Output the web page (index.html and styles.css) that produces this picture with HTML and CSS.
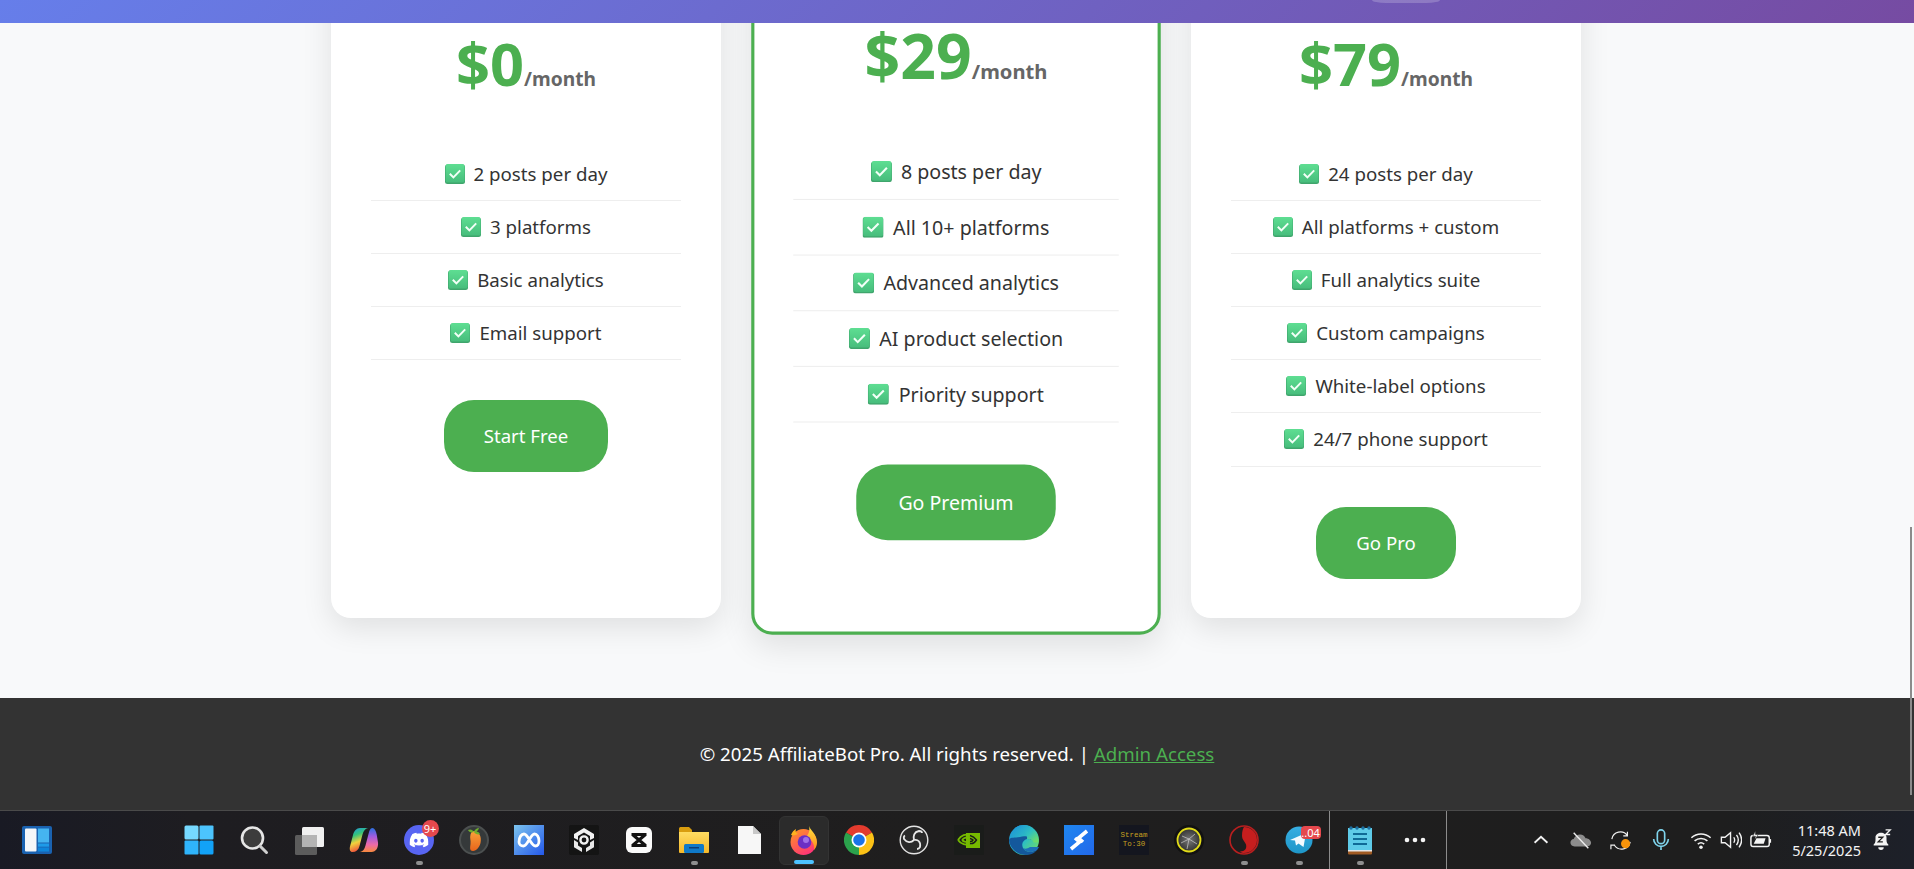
FILE: index.html
```html
<!DOCTYPE html>
<html lang="en">
<head>
<meta charset="utf-8">
<title>AffiliateBot Pro</title>
<link rel="stylesheet" href="styles.css">
</head>
<body>
<svg class="defs" width="0" height="0" aria-hidden="true">
  <defs>
    <linearGradient id="chk" x1="0" y1="0" x2="0" y2="1"><stop offset="0" stop-color="#5ede92"/><stop offset="1" stop-color="#47bd7c"/></linearGradient>
    <symbol id="check" viewBox="0 0 20 20">
      <rect x="0" y="0.5" width="20" height="19.5" rx="2.5" fill="#3fa56c"/>
      <rect x="0.6" y="0" width="19" height="18.6" rx="2.2" fill="url(#chk)"/>
      <path d="M4.8 9.8l3.6 3.6 6.8-7" fill="none" stroke="#f2fff7" stroke-width="2"/>
    </symbol>
    <linearGradient id="cop1" x1="0" y1="0" x2="0.3" y2="1"><stop offset="0" stop-color="#1f8fe8"/><stop offset=".35" stop-color="#33c47c"/><stop offset=".65" stop-color="#f2d23c"/><stop offset="1" stop-color="#f0503c"/></linearGradient>
    <linearGradient id="cop2" x1="0.5" y1="0" x2="0.5" y2="1"><stop offset="0" stop-color="#2a6fe0"/><stop offset=".35" stop-color="#a05ce0"/><stop offset=".7" stop-color="#ee6aa6"/><stop offset="1" stop-color="#f78a3c"/></linearGradient>
    <linearGradient id="meta" x1="0" y1="0" x2="1" y2="1"><stop offset="0" stop-color="#7cc4ee"/><stop offset="1" stop-color="#2458ea"/></linearGradient>
    <linearGradient id="fl" x1="0" y1="0" x2="0" y2="1"><stop offset="0" stop-color="#f9a23a"/><stop offset="1" stop-color="#e8641c"/></linearGradient>
    <linearGradient id="fold" x1="0" y1="0" x2="0" y2="1"><stop offset="0" stop-color="#ffdc62"/><stop offset="1" stop-color="#f5b82a"/></linearGradient>
    <linearGradient id="fox" x1="0" y1="0" x2="0.6" y2="1"><stop offset="0" stop-color="#ff9a1f"/><stop offset="1" stop-color="#ff3576"/></linearGradient>
    <linearGradient id="flame" x1="0" y1="0" x2="0" y2="1"><stop offset="0" stop-color="#ffe13c"/><stop offset="1" stop-color="#ff8a1f"/></linearGradient>
    <linearGradient id="edge" x1="0" y1="0" x2="1" y2="0.8"><stop offset="0" stop-color="#1b8fdc"/><stop offset=".6" stop-color="#2fc0c0"/><stop offset="1" stop-color="#6ddc6a"/></linearGradient>
    <linearGradient id="xm" x1="0" y1="0" x2="1" y2="1"><stop offset="0" stop-color="#1f86f0"/><stop offset="1" stop-color="#2268ea"/></linearGradient>
    <linearGradient id="tg" x1="0" y1="0" x2="0" y2="1"><stop offset="0" stop-color="#37aee2"/><stop offset="1" stop-color="#1e96c8"/></linearGradient>
    <radialGradient id="globe"><stop offset="0" stop-color="#777"/><stop offset="1" stop-color="#333"/></radialGradient>
  </defs>
</svg>

<header class="topbar"><span class="nav-pill"></span></header>

<main class="pricing">
  <div class="plans">
    <article class="plan">
      <div class="price">$0<span class="per">/month</span></div>
      <ul class="features">
        <li class="feature"><svg class="tick"><use href="#check"/></svg><span>2 posts per day</span></li>
        <li class="feature"><svg class="tick"><use href="#check"/></svg><span>3 platforms</span></li>
        <li class="feature"><svg class="tick"><use href="#check"/></svg><span>Basic analytics</span></li>
        <li class="feature"><svg class="tick"><use href="#check"/></svg><span>Email support</span></li>
      </ul>
      <a class="cta">Start Free</a>
    </article>
    <article class="plan plan-featured">
      <div class="price">$29<span class="per">/month</span></div>
      <ul class="features">
        <li class="feature"><svg class="tick"><use href="#check"/></svg><span>8 posts per day</span></li>
        <li class="feature"><svg class="tick"><use href="#check"/></svg><span>All 10+ platforms</span></li>
        <li class="feature"><svg class="tick"><use href="#check"/></svg><span>Advanced analytics</span></li>
        <li class="feature"><svg class="tick"><use href="#check"/></svg><span>AI product selection</span></li>
        <li class="feature"><svg class="tick"><use href="#check"/></svg><span>Priority support</span></li>
      </ul>
      <a class="cta">Go Premium</a>
    </article>
    <article class="plan">
      <div class="price">$79<span class="per">/month</span></div>
      <ul class="features">
        <li class="feature"><svg class="tick"><use href="#check"/></svg><span>24 posts per day</span></li>
        <li class="feature"><svg class="tick"><use href="#check"/></svg><span>All platforms + custom</span></li>
        <li class="feature"><svg class="tick"><use href="#check"/></svg><span>Full analytics suite</span></li>
        <li class="feature"><svg class="tick"><use href="#check"/></svg><span>Custom campaigns</span></li>
        <li class="feature"><svg class="tick"><use href="#check"/></svg><span>White-label options</span></li>
        <li class="feature"><svg class="tick"><use href="#check"/></svg><span>24/7 phone support</span></li>
      </ul>
      <a class="cta">Go Pro</a>
    </article>
  </div>
</main>

<footer class="site-footer">
  <p class="legal">© 2025 AffiliateBot Pro. All rights reserved. | <a class="admin" href="#">Admin Access</a></p>
</footer>

<div class="scroll-thumb"></div>

<nav class="taskbar">
  <div class="widgets">
    <svg class="ico" viewBox="0 0 30 30"><rect x="0" y="1" width="30" height="28" rx="2" fill="#1a62b0"/><rect x="3" y="3.5" width="11.5" height="23" rx="1" fill="#f4f6f8"/><rect x="16" y="3.5" width="11" height="14" fill="#45b4f0"/><rect x="16" y="18.5" width="11" height="3.2" fill="#1e9be8"/><rect x="16" y="22.5" width="11" height="4" fill="#0e85da"/></svg>
  </div>
  <div class="apps">
    <div class="app"><svg class="ico" viewBox="0 0 30 30"><rect x="0.5" y="0.5" width="14" height="14" rx="1.5" fill="#76d9ff"/><rect x="15.5" y="0.5" width="14" height="14" rx="1" fill="#4cc4fd"/><rect x="0.5" y="15.5" width="14" height="14" rx="1" fill="#2fb4fb"/><rect x="15.5" y="15.5" width="14" height="14" rx="1.5" fill="#12a2f7"/></svg></div>
    <div class="app"><svg class="ico" viewBox="0 0 30 30"><circle cx="13.5" cy="13" r="10.5" fill="#3c3c3c" stroke="#e6e6e6" stroke-width="2.6"/><path d="M21 21l6.5 6.5" stroke="#cfcfcf" stroke-width="3" stroke-linecap="round"/></svg></div>
    <div class="app"><svg class="ico" viewBox="0 0 30 30"><rect x="1" y="10" width="22" height="20" rx="1.5" fill="#5c5c5c"/><rect x="8" y="2" width="22" height="20" rx="1.5" fill="#f0f0f0"/><rect x="8" y="10" width="15" height="12" fill="#b4b4b4"/></svg></div>
    <div class="app"><svg class="ico" viewBox="0 0 30 30"><path d="M11 3h8c-3 .5-4.500 3-5.500 6.500L10.500 21c-1 4-3.500 6-7 6C1 27 .3 24.500 1 21.500L4 10c1-4 3.500-7 7-7z" fill="url(#cop1)"/><path d="M19 27h-8c3-.5 4.500-3 5.500-6.500L19.500 9c.8-3.500 1.500-5.500 3.500-6 2.500-.3 4 3 4.700 6.500l1.300 8c.6 5-2 9.500-6.500 9.500z" fill="url(#cop2)"/></svg></div>
    <div class="app is-running">
      <svg class="ico" viewBox="0 0 30 30"><circle cx="15" cy="15" r="15" fill="#5865f2"/><svg x="5.500" y="5.500" width="19" height="19" viewBox="0 0 24 24"><path fill="#fff" d="M20.317 4.3698a19.7913 19.7913 0 00-4.8851-1.5152.0741.0741 0 00-.0785.0371c-.211.3753-.4447.8648-.6083 1.2495-1.8447-.2762-3.68-.2762-5.4868 0-.1636-.3933-.4058-.8742-.6177-1.2495a.077.077 0 00-.0785-.037 19.7363 19.7363 0 00-4.8852 1.515.0699.0699 0 00-.0321.0277C.5334 9.0458-.319 13.5799.0992 18.0578a.0824.0824 0 00.0312.0561c2.0528 1.5076 4.0413 2.4228 5.9929 3.0294a.0777.0777 0 00.0842-.0276c.4616-.6304.8731-1.2952 1.226-1.9942a.076.076 0 00-.0416-.1057c-.6528-.2476-1.2743-.5495-1.8722-.8923a.077.077 0 01-.0076-.1277c.1258-.0943.2517-.1923.3718-.2914a.0743.0743 0 01.0776-.0105c3.9278 1.7933 8.18 1.7933 12.0614 0a.0739.0739 0 01.0785.0095c.1202.099.246.1981.3728.2924a.077.077 0 01-.0066.1276 12.2986 12.2986 0 01-1.873.8914.0766.0766 0 00-.0407.1067c.3604.698.7719 1.3628 1.225 1.9932a.076.076 0 00.0842.0286c1.961-.6067 3.9495-1.5219 6.0023-3.0294a.077.077 0 00.0313-.0552c.5004-5.177-.8382-9.6739-3.5485-13.6604a.061.061 0 00-.0312-.0286zM8.02 15.3312c-1.1825 0-2.1569-1.0857-2.1569-2.419 0-1.3332.9555-2.4189 2.157-2.4189 1.2108 0 2.1757 1.0952 2.1568 2.419 0 1.3332-.9555 2.4189-2.1569 2.4189zm7.9748 0c-1.1825 0-2.1569-1.0857-2.1569-2.419 0-1.3332.9554-2.4189 2.1569-2.4189 1.2108 0 2.1757 1.0952 2.1568 2.419 0 1.3332-.946 2.4189-2.1568 2.4189Z"/></svg></svg>
      <span class="badge badge-round">9+</span>
    </div>
    <div class="app"><svg class="ico" viewBox="0 0 30 30"><circle cx="15" cy="15" r="14" fill="#35393a" stroke="#4c5050" stroke-width="2"/><path d="M15 6c5 0 8 6 6.500 12-1 4-4 8-7.500 8-3.500 0-3-3-2.500-7 .5-4-1-6 0-9.500C12 7 13.500 6 15 6z" fill="url(#fl)"/><path d="M15 7c-2-3-4-3-6-2 1 2 3 3 6 2zm0 0c1-3 3-4 5-4-.5 2-2 4-5 4zm0 0c3-1 5 0 6 2-2 1-5 0-6-2z" fill="#6fae2e"/></svg></div>
    <div class="app"><svg class="ico" viewBox="0 0 30 30"><rect width="30" height="30" fill="url(#meta)"/><path d="M5 17c0-5 2.500-8 5-8 4 0 7 12 11.500 12 2 0 3.500-2 3.500-5 0-4-2-7-4.500-7-4 0-7 12-11 12-2.500 0-4.500-1.500-4.500-4z" fill="none" stroke="#fff" stroke-width="2.800"/></svg></div>
    <div class="app"><svg class="ico" viewBox="0 0 30 30"><rect width="30" height="30" rx="2" fill="#141414"/><path d="M15 3l10 6v4l-4 2v-4l-6-3.500L9 11v4l-4-2V9z" fill="#f2f2f2"/><path d="M5 15l4 2.500v3l4 2.500v4l-8-4.800zM25 15l-4 2.500v3l-4 2.500v4l8-4.800z" fill="#e8e8e8"/><circle cx="15" cy="15" r="3.600" fill="none" stroke="#f2f2f2" stroke-width="2.400"/></svg></div>
    <div class="app"><svg class="ico" viewBox="0 0 30 30"><rect x="2" y="2" width="26" height="26" rx="6" fill="#fafafa"/><path d="M7.500 9.500h15M7.500 20.500h15M8.500 9.500l13 11M21.500 9.500l-13 11" stroke="#111" stroke-width="3" fill="none"/></svg></div>
    <div class="app is-running"><svg class="ico" viewBox="0 0 30 30"><path d="M0 3.500C0 2.500 1 2 2 2h8l3 3v6H0z" fill="#d99d0f"/><path d="M0 27V7h30v20a1 1 0 01-1 1H1a1 1 0 01-1-1z" fill="url(#fold)"/><rect x="5" y="19" width="20" height="9" rx="1.500" fill="#0f79c8"/><rect x="10" y="22" width="10" height="1.500" fill="#0a3e78"/></svg></div>
    <div class="app"><svg class="ico" viewBox="0 0 30 30"><path d="M4 1h15l8 8v20H4z" fill="#f7f7f7"/><path d="M19 1v8h8z" fill="#c8c8c8"/></svg></div>
    <div class="app is-active">
      <svg class="ico" viewBox="0 0 30 30"><circle cx="14.500" cy="17" r="13" fill="url(#fox)"/><path d="M20 1c1 4 8 8 8 16 0 3-1 6-3 8 1-6-3-12-8-13 3-3 4-7 3-11z" fill="url(#flame)"/><path d="M2 10c1-3 3-5 5-6-1 3 0 4 2 5-3 1-5 2-7 1z" fill="#ffb21f"/><circle cx="15.500" cy="17" r="6.800" fill="#6b2fc4"/><circle cx="17" cy="15" r="3" fill="#a070e8"/></svg>
      <span class="active-bar"></span>
    </div>
    <div class="app"><svg class="ico" viewBox="0 0 30 30"><path d="M15 15L2 7.500A15 15 0 0128 7.500z" fill="#e33b2e"/><path d="M15 15L28 7.500A15 15 0 0115 30z" fill="#fbc116"/><path d="M15 15L15 30A15 15 0 012 7.500z" fill="#2ba24c"/><circle cx="15" cy="15" r="7.500" fill="#fff"/><circle cx="15" cy="15" r="5.800" fill="#1a73e8"/></svg></div>
    <div class="app"><svg class="ico" viewBox="0 0 30 30"><circle cx="15" cy="15" r="13.800" fill="#2a2a2a" stroke="#e4e4e4" stroke-width="1.400"/><g fill="none" stroke="#e8e8e8" stroke-width="1.800"><path d="M15 15c-1-4 0-8 5-9 2 0 3 1 3 2"/><path d="M15 15c4-1 7 2 6 7-1 2-2 2-3 2"/><path d="M15 15c-3 3-7 3-10-1-.5-2 0-3 1-3.500"/></g></svg></div>
    <div class="app"><svg class="ico" viewBox="0 0 30 30"><rect width="30" height="30" fill="#1a1c1a"/><path d="M12 8h14v15H12z" fill="#76b900"/><path d="M4 15c3-5 8-6.500 12-4.500M4 15c3 4.500 8 5.500 12 3.500M8 15c2-2.500 5-3 7-1.500M8 15c2 2 5 2.500 7 1" fill="none" stroke="#76b900" stroke-width="1.800"/><path d="M16 10.500c3 .8 5 2.500 6.500 4.500-2 3-4.500 4-6.500 3.500M16 13.500c1.500.3 2.500 1 3 1.500-.8 1.200-2 1.700-3 1.500" fill="none" stroke="#1a1c1a" stroke-width="1.400"/></svg></div>
    <div class="app"><svg class="ico" viewBox="0 0 30 30"><circle cx="15" cy="15" r="15" fill="url(#edge)"/><path d="M0 15C1 24 9 30 17 30c4 0 8-1.500 10-4-5 2-11 1-13-3-2-4 0-8 4-9 3 0 6 1 6 2-2-4-8-6-13-4C5 13 1 12 0 15z" fill="#14589c"/><path d="M14 23c2 4 8 5 13 3 1-1 2-2 3-4h-9c-3 2-5 2-7 1z" fill="#1c6fb8"/><path d="M18 14c3-.5 6 1 6.500 3.500h5C30 8 22 0 15 0c-4 0-8 1.500-10 4 5-2 14 1 13 10z" fill="url(#edge)"/></svg></div>
    <div class="app"><svg class="ico" viewBox="0 0 30 30"><rect width="30" height="30" fill="url(#xm)"/><path d="M23 6l-8.500 7 4.500 4M7 24l8.500-7-4.500-4" fill="none" stroke="#fff" stroke-width="3.600"/></svg></div>
    <div class="app"><div class="stream"><span>Stream</span><span>To:30</span></div></div>
    <div class="app"><svg class="ico" viewBox="0 0 30 30"><circle cx="15" cy="15" r="15" fill="#111"/><circle cx="15" cy="15" r="11.500" fill="url(#globe)" stroke="#e2dc18" stroke-width="1.800"/><path d="M8 11l7 3 6-5M15 14l-2 10M15 14l8 5M7 18l8-4" fill="none" stroke="#cfcfcf" stroke-width=".7"/></svg></div>
    <div class="app is-running"><svg class="ico" viewBox="0 0 30 30"><circle cx="15" cy="15" r="14" fill="#1e1e1e" stroke="#b81f1f" stroke-width="1.600"/><path d="M15 2a13 13 0 010 26c-1 0-3-.5-4-1.500 5 0 7-3 6-7-1-3-4-4.500-4-9 0-4.500 1-7 2-8.500z" fill="#c61e1e"/></svg></div>
    <div class="app is-running">
      <svg class="ico" viewBox="0 0 30 30"><circle cx="15" cy="15" r="13.500" fill="url(#tg)"/><path d="M6 15l16-7-2.500 14-5-3.500-2.500 2-1-5z" fill="#f4fbff"/></svg>
      <span class="badge badge-wide">..04</span>
    </div>
  </div>
  <span class="divider"></span>
  <div class="apps apps-pinned">
    <div class="app is-running"><svg class="ico" viewBox="0 0 30 30"><path d="M3 3h24v24H3z" fill="#5ecbe8"/><path d="M3 26h24v2.500a1 1 0 01-1 1H4a1 1 0 01-1-1z" fill="#a05a22"/><path d="M3 25h24v1.500H3z" fill="#e6e6e6"/><g fill="#1d6fa0"><circle cx="6" cy="3" r="1.700"/><circle cx="12" cy="3" r="1.700"/><circle cx="18" cy="3" r="1.700"/><circle cx="24" cy="3" r="1.700"/></g><path d="M8 9h14M8 14h14M8 19h14" stroke="#0f6a96" stroke-width="2.200"/></svg></div>
    <div class="app"><svg class="ico" viewBox="0 0 30 30"><circle cx="7" cy="15" r="2.300" fill="#f4f4f4"/><circle cx="15" cy="15" r="2.300" fill="#f4f4f4"/><circle cx="23" cy="15" r="2.300" fill="#f4f4f4"/></svg></div>
  </div>
  <span class="divider divider-end"></span>
  <div class="tray">
    <span class="tray-item"><svg class="tray-ico" viewBox="0 0 24 24"><path d="M5 15l7-6.500 7 6.500" fill="none" stroke="#f2f2f2" stroke-width="2"/></svg></span>
    <span class="tray-item"><svg class="tray-ico" viewBox="0 0 24 24"><path d="M5 19c-3 0-4.500-2-4.500-4s1.500-4 3.500-4c1-3 4-5 7-5 3 0 5 1.500 6 4 3.500 0 6 2.500 6 5 0 2-1.500 4-4 4z" fill="#8d8d8d"/><path d="M4 4l16 17" stroke="#eee" stroke-width="1.500"/></svg></span>
    <span class="tray-item"><svg class="tray-ico" viewBox="0 0 24 24"><path d="M2 11a9.500 9.500 0 0117-4M19 3v4.500h-4.500M22 14a9.500 9.500 0 01-17 4M1 22v-4.500h4.500" fill="none" stroke="#f0f0f0" stroke-width="1.300"/><circle cx="17" cy="16" r="5" fill="#f7930a"/></svg></span>
    <span class="tray-item"><svg class="tray-ico" viewBox="0 0 24 24"><rect x="8" y="1" width="8" height="15" rx="4" fill="none" stroke="#7fd4ec" stroke-width="1.800"/><path d="M4 11a8 8 0 0016 0M12 19v4" fill="none" stroke="#7fd4ec" stroke-width="1.800"/></svg></span>
    <span class="tray-item"><svg class="tray-ico" viewBox="0 0 24 24"><path d="M1.500 9.500c6-5.500 15-5.500 21 0M5 13c4-3.500 10-3.500 14 0M8.500 16.500c2-1.700 5-1.700 7 0" fill="none" stroke="#f2f2f2" stroke-width="1.700"/><circle cx="12" cy="20" r="1.900" fill="#f2f2f2"/></svg></span>
    <span class="tray-item tray-narrow"><svg class="tray-ico" viewBox="0 0 24 24"><path d="M1.500 9v6h4l6 5V4l-6 5z" fill="none" stroke="#f2f2f2" stroke-width="1.500"/><path d="M15 9c1.300 2 1.300 4 0 6M18 6.500c2.500 3.500 2.500 7.500 0 11M20.800 4c3.500 5 3.500 11 0 16" fill="none" stroke="#f2f2f2" stroke-width="1.500"/></svg></span>
    <span class="tray-item"><svg class="tray-ico" viewBox="0 0 24 24"><rect x="1" y="7" width="20" height="12" rx="2.500" fill="none" stroke="#f4f4f4" stroke-width="1.600"/><path d="M22 11v4" stroke="#f4f4f4" stroke-width="2"/><path d="M4 16l3-6h10l-2 6z" fill="#f4f4f4"/><path d="M6 2L3 8h3l-1 4 4-6H6z" fill="#f4f4f4" stroke="#1e1e1e" stroke-width=".6"/></svg></span>
    <div class="clock"><span>11:48 AM</span><span>5/25/2025</span></div>
    <span class="bell"><svg class="tray-ico" viewBox="0 0 24 24"><path d="M4 17c1-1 2-2 2-5V9c0-3 3-5 6-5s6 2 6 5v3c0 3 1 4 2 5v1H4z" fill="#f4f4f4"/><path d="M9 20a3 3 0 006 0z" fill="#f4f4f4"/><path d="M9 9h5l-5 5h5" fill="none" stroke="#1e1e1e" stroke-width="1.400"/><path d="M17 1h5l-5 5h5" fill="none" stroke="#f4f4f4" stroke-width="1.500"/></svg></span>
  </div>
</nav>
</body>
</html>
```

FILE: styles.css
```css
* { box-sizing: border-box; }
html, body { margin: 0; height: 100%; }
body {
  display: flex;
  flex-direction: column;
  height: 100vh;
  overflow: hidden;
  position: relative;
  background: #f8f9fa;
  font-family: "Noto Sans", "Open Sans", "Liberation Sans", sans-serif;
  color: #333;
}
.defs { position: absolute; }

.topbar {
  flex: 0 0 23px;
  display: flex;
  justify-content: flex-end;
  align-items: flex-start;
  padding-right: 474px;
  background: linear-gradient(135deg, #667eea 0%, #764ba2 100%);
  position: relative;
  z-index: 2;
}
.nav-pill {
  width: 68px;
  height: 3px;
  background: rgba(255, 255, 255, 0.2);
  border-radius: 0 0 14px 14px / 0 0 3px 3px;
}

.pricing {
  flex: 1 1 auto;
  min-height: 0;
  overflow: hidden;
  padding-right: 2px;
}
.plans {
  width: 1250px;
  margin: -71px auto 0;
  display: grid;
  grid-template-columns: repeat(3, 390px);
  gap: 40px;
}
.plan {
  background: #fff;
  border-radius: 20px;
  padding: 77px 40px 39.4px;
  text-align: center;
  box-shadow: 0 10px 30px rgba(0, 0, 0, 0.1);
}
.plan-featured {
  border: 3px solid #4caf50;
  padding: 77px 37px 34px;
  transform: scale(1.05);
}
.price {
  font-size: 59.5px;
  line-height: 67px;
  font-weight: 700;
  color: #4caf50;
  white-space: nowrap;
}
.per {
  font-size: 19.2px;
  line-height: 1;
  color: #666;
}
.features {
  list-style: none;
  margin: 51.6px 0 40px;
  padding: 0;
}
.feature {
  display: flex;
  justify-content: center;
  align-items: center;
  gap: 9px;
  padding: 12px 0;
  border-bottom: 1px solid #eee;
  font-size: 18.7px;
  line-height: 28.16px;
  height: 53.16px;
  white-space: nowrap;
}
.tick { width: 20px; height: 20px; flex: none; }
.cta {
  display: inline-block;
  padding: 22px 40px;
  border-radius: 30px;
  background: #4caf50;
  color: #fff;
  font-size: 18.6px;
  line-height: 28px;
}

.site-footer {
  flex: 0 0 112px;
  display: flex;
  align-items: center;
  justify-content: center;
  background: #333;
  color: #fff;
}
.legal { margin: 0; font-size: 18.7px; line-height: 28px; }
.admin { color: #4caf50; text-decoration: underline; }

.scroll-thumb {
  position: absolute;
  left: 1910px;
  top: 527px;
  width: 2px;
  height: 268px;
  background: #8b8b8b;
  z-index: 3;
}

.taskbar {
  flex: 0 0 59px;
  display: flex;
  align-items: center;
  border-top: 1px solid #4a4a4a;
  background: linear-gradient(90deg, #191a24 0%, #1e1d21 10%, #1f1e1e 50%, #1e1e1e 90%, #1d2029 100%);
  color: #f4f4f4;
}
.widgets { margin-left: 22px; display: flex; }
.ico { width: 30px; height: 30px; display: block; }
.apps { display: flex; margin-left: 119.5px; }
.apps-pinned { margin-left: 2.5px; }
.app {
  position: relative;
  width: 55px;
  height: 49px;
  display: flex;
  align-items: center;
  justify-content: center;
}
.is-running::after {
  content: "";
  position: absolute;
  left: 24px;
  bottom: 0;
  width: 7px;
  height: 4px;
  border-radius: 2px;
  background: #8f8f8f;
}
.is-active {
  width: 50px;
  margin: 0 2.5px;
  background: #2b2b2b;
  border: 1px solid #333;
  border-radius: 6px;
}
.active-bar {
  position: absolute;
  left: 14px;
  bottom: 0;
  width: 20px;
  height: 4px;
  border-radius: 2px;
  background: #4cc2ff;
}
.badge {
  position: absolute;
  background: #e5484d;
  color: #fff;
  font-size: 11px;
  text-align: center;
}
.badge-round {
  top: 4px;
  right: 8px;
  width: 17px;
  height: 17px;
  line-height: 17px;
  border-radius: 50%;
}
.badge-wide {
  top: 10px;
  right: 6px;
  width: 20px;
  height: 13px;
  line-height: 13px;
  border-radius: 4px;
  white-space: nowrap;
}
.stream {
  width: 30px;
  height: 30px;
  background: #14161f;
  color: #c8a020;
  font-family: "Liberation Mono", monospace;
  font-size: 7.5px;
  line-height: 9px;
  display: flex;
  flex-direction: column;
  justify-content: center;
  align-items: center;
}
.divider {
  width: 1px;
  height: 58px;
  margin-left: 2.5px;
  background: #8c8c8c;
}
.divider-end { margin-left: 3.5px; }
.tray {
  flex: 1 1 auto;
  display: flex;
  align-items: center;
  padding-left: 74px;
  padding-right: 22px;
}
.tray-item {
  width: 40px;
  display: flex;
  justify-content: center;
}
.tray-narrow { width: 20px; overflow: visible; }
.tray-ico { width: 22px; height: 22px; display: block; flex: none; }
.clock {
  margin-left: auto;
  display: flex;
  flex-direction: column;
  align-items: flex-end;
  font-size: 14.5px;
  line-height: 20px;
  white-space: nowrap;
}
.bell { margin-left: 9px; width: 22px; }
```
